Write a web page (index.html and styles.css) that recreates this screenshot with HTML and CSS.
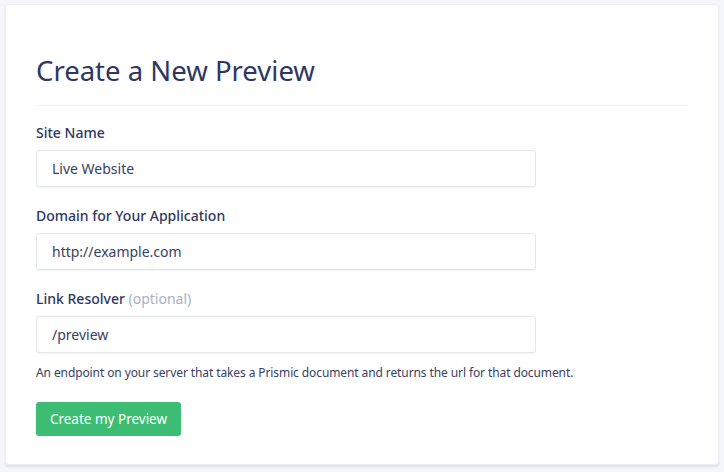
FILE: index.html
```html
<!DOCTYPE html>
<html lang="en">
<head>
    <title>Create a New Preview</title>
    <meta name='viewport' content='width=device-width, initial-scale=1'>
    <link rel="stylesheet" href="styles.css">
</head>
<body>
<div class="card">
    <h1>Create a New Preview</h1>
    <form action='/previews' method='POST'>
        <div class="form-group">
            <label for='site-name'>Site Name</label>
            <input type='text' id='site-name' name='name' value='Live Website'>
        </div>
        <div class="form-group">
            <label for='domain'>Domain for Your Application</label>
            <input type='text' id='domain' name='domain' value='http://example.com'>
        </div>
        <div class="form-group">
            <label for='resolver'>Link Resolver <span class="optional">(optional)</span></label>
            <input type='text' id='resolver' name='resolver' value='/preview'>
            <p class="help">An endpoint on your server that takes a Prismic document and returns the url for that document.</p>
        </div>
        <button type='submit'>Create my Preview</button>
    </form>
</div>
</body>
</html>
```

FILE: styles.css
```css
:root {
    --page: #f4f6fb;
    --card: #ffffff;
    --line: #e6e9f1;
    --navy: #2f375f;
    --text: #3a4063;
    --muted: #a7b1c4;
    --green: #3dbd74;
}

html {
    box-sizing: border-box;
}

*, *:before, *:after {
    box-sizing: inherit;
}

body {
    margin: 0;
    padding: 4px 5px;
    font-family: "Noto Sans", "Open Sans", sans-serif;
    background-color: var(--page);
    color: var(--text);
}

.card {
    width: 714px;
    height: 461px;
    background-color: var(--card);
    border: 1px solid #eceef5;
    border-radius: 3px;
    box-shadow: 0 2px 2px rgba(40, 50, 90, 0.1);
    padding: 46px 31px 0 30px;
}

h1 {
    margin: 0;
    padding-bottom: 14px;
    width: 652px;
    border-bottom: 1px solid #eef0f5;
    font-size: 27.5px;
    font-weight: 400;
    line-height: 40px;
    color: var(--navy);
}

form {
    padding-top: 17px;
}

.form-group {
    margin-bottom: 19px;
}

.form-group:last-of-type {
    margin-bottom: 0;
}

label {
    display: block;
    margin-bottom: 7px;
    font-size: 14px;
    font-weight: 500;
    line-height: 20px;
    color: var(--navy);
}

.optional {
    color: var(--muted);
    font-weight: 400;
}

input[type='text'] {
    display: block;
    width: 500px;
    height: 37px;
    padding: 0 15px;
    border: 1px solid #e4e7f0;
    border-radius: 3px;
    box-shadow: 0 1px 1px rgba(40, 50, 90, 0.06);
    font-family: inherit;
    font-size: 14px;
    color: var(--text);
    background: #fff;
}

input[type='text']:focus {
    outline: none;
    border-color: var(--green);
}

.help {
    margin: 11px 0 0;
    font-size: 12px;
    line-height: 18px;
    letter-spacing: -0.1px;
    color: var(--text);
}

button {
    margin-top: 20px;
    width: 145px;
    height: 34px;
    border: none;
    border-radius: 3px;
    background-color: var(--green);
    color: #fff;
    font-family: inherit;
    font-size: 13.5px;
    cursor: pointer;
}
```
